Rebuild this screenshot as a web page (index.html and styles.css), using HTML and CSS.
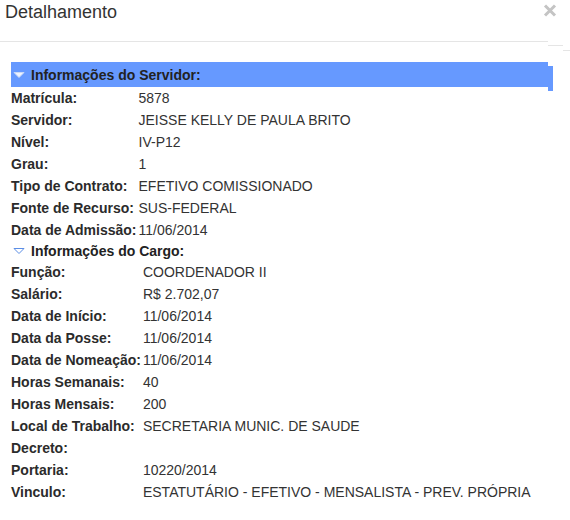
FILE: index.html
```html
<!DOCTYPE html>
<html lang="pt-BR">
<head>
    <meta charset="UTF-8">
    <title>Detalhamento</title>
    <link rel="stylesheet" href="styles.css">
</head>
<body>
    <div class="dialog">
        <div class="dialog-header">
            <span class="dialog-title">Detalhamento</span>
            <svg class="dialog-close" width="14" height="13" viewBox="0 0 14 13"><path d="M2 1.5 L12 11.5 M12 1.5 L2 11.5" stroke="#c4c4c4" stroke-width="3"/></svg>
        </div>
        <div class="dialog-body">
            <div class="section-title active">
                <svg class="arrow" width="12" height="8" viewBox="0 0 12 8"><path d="M1 1.5 L11 1.5 L6 6.5 Z" fill="#eef3ff" stroke="#c9d8f5" stroke-width="1"/></svg>
                Informações do Servidor:
            </div>
            <table class="details">
                <tr><td class="lbl">Matrícula:</td><td>5878</td></tr>
                <tr><td class="lbl">Servidor:</td><td>JEISSE KELLY DE PAULA BRITO</td></tr>
                <tr><td class="lbl">Nível:</td><td>IV-P12</td></tr>
                <tr><td class="lbl">Grau:</td><td>1</td></tr>
                <tr><td class="lbl">Tipo de Contrato:</td><td>EFETIVO COMISSIONADO</td></tr>
                <tr><td class="lbl">Fonte de Recurso:</td><td>SUS-FEDERAL</td></tr>
                <tr><td class="lbl">Data de Admissão:</td><td>11/06/2014</td></tr>
            </table>
            <div class="section-title plain">
                <svg class="arrow" width="12" height="8" viewBox="0 0 12 8"><path d="M1 1.5 L11 1.5 L6 6.5 Z" fill="#ffffff" stroke="#5b8ee6" stroke-width="1"/></svg>
                Informações do Cargo:
            </div>
            <table class="details">
                <tr><td class="lbl">Função:</td><td>COORDENADOR II</td></tr>
                <tr><td class="lbl">Salário:</td><td>R$ 2.702,07</td></tr>
                <tr><td class="lbl">Data de Início:</td><td>11/06/2014</td></tr>
                <tr><td class="lbl">Data da Posse:</td><td>11/06/2014</td></tr>
                <tr><td class="lbl">Data de Nomeação:</td><td>11/06/2014</td></tr>
                <tr><td class="lbl">Horas Semanais:</td><td>40</td></tr>
                <tr><td class="lbl">Horas Mensais:</td><td>200</td></tr>
                <tr><td class="lbl">Local de Trabalho:</td><td>SECRETARIA MUNIC. DE SAUDE</td></tr>
                <tr><td class="lbl">Decreto:</td><td></td></tr>
                <tr><td class="lbl">Portaria:</td><td>10220/2014</td></tr>
                <tr><td class="lbl">Vinculo:</td><td>ESTATUTÁRIO - EFETIVO - MENSALISTA - PREV. PRÓPRIA</td></tr>
            </table>
        </div>
    </div>
</body>
</html>
```

FILE: styles.css
```css
body {
    margin: 0;
    background: #ffffff;
    font-family: "Liberation Sans", Arial, sans-serif;
    color: #333333;
}
.dialog {
    width: 570px;
}
.dialog-header {
    position: relative;
    width: 548px;
    height: 42px;
    border-bottom: 1px solid #e5e5e5;
    box-sizing: border-box;
}
.dialog-header::before,
.dialog-header::after {
    content: "";
    position: absolute;
    height: 1px;
    background: #e5e5e5;
}
.dialog-header::before {
    left: 548px;
    width: 15px;
    top: 45px;
}
.dialog-header::after {
    left: 563px;
    width: 7px;
    top: 50px;
}
.dialog-title {
    display: block;
    padding: 2px 0 0 5px;
    font-size: 18px;
    line-height: 20px;
    color: #333333;
}
.dialog-close {
    position: absolute;
    left: 543px;
    top: 4px;
}
.dialog-body {
    padding: 20px 0 0 11px;
}
.section-title {
    display: flex;
    align-items: center;
    gap: 6px;
    font-size: 14px;
    font-weight: bold;
    color: #222222;
    padding-left: 2px;
}
.section-title.active {
    position: relative;
    width: 535px;
    height: 25px;
    background: #6699ff;
}
.section-title.active::after {
    content: "";
    position: absolute;
    left: 537px;
    top: 4px;
    width: 5px;
    height: 25px;
    background: #6699ff;
}
.section-title.plain {
    height: 20px;
}
.arrow {
    display: block;
}
.details {
    border-collapse: collapse;
    font-size: 14px;
}
.details td {
    height: 22px;
    padding: 0 2px 0 0;
    white-space: nowrap;
    color: #333333;
}
.details td.lbl {
    font-weight: bold;
    color: #2b2b2b;
}
```
